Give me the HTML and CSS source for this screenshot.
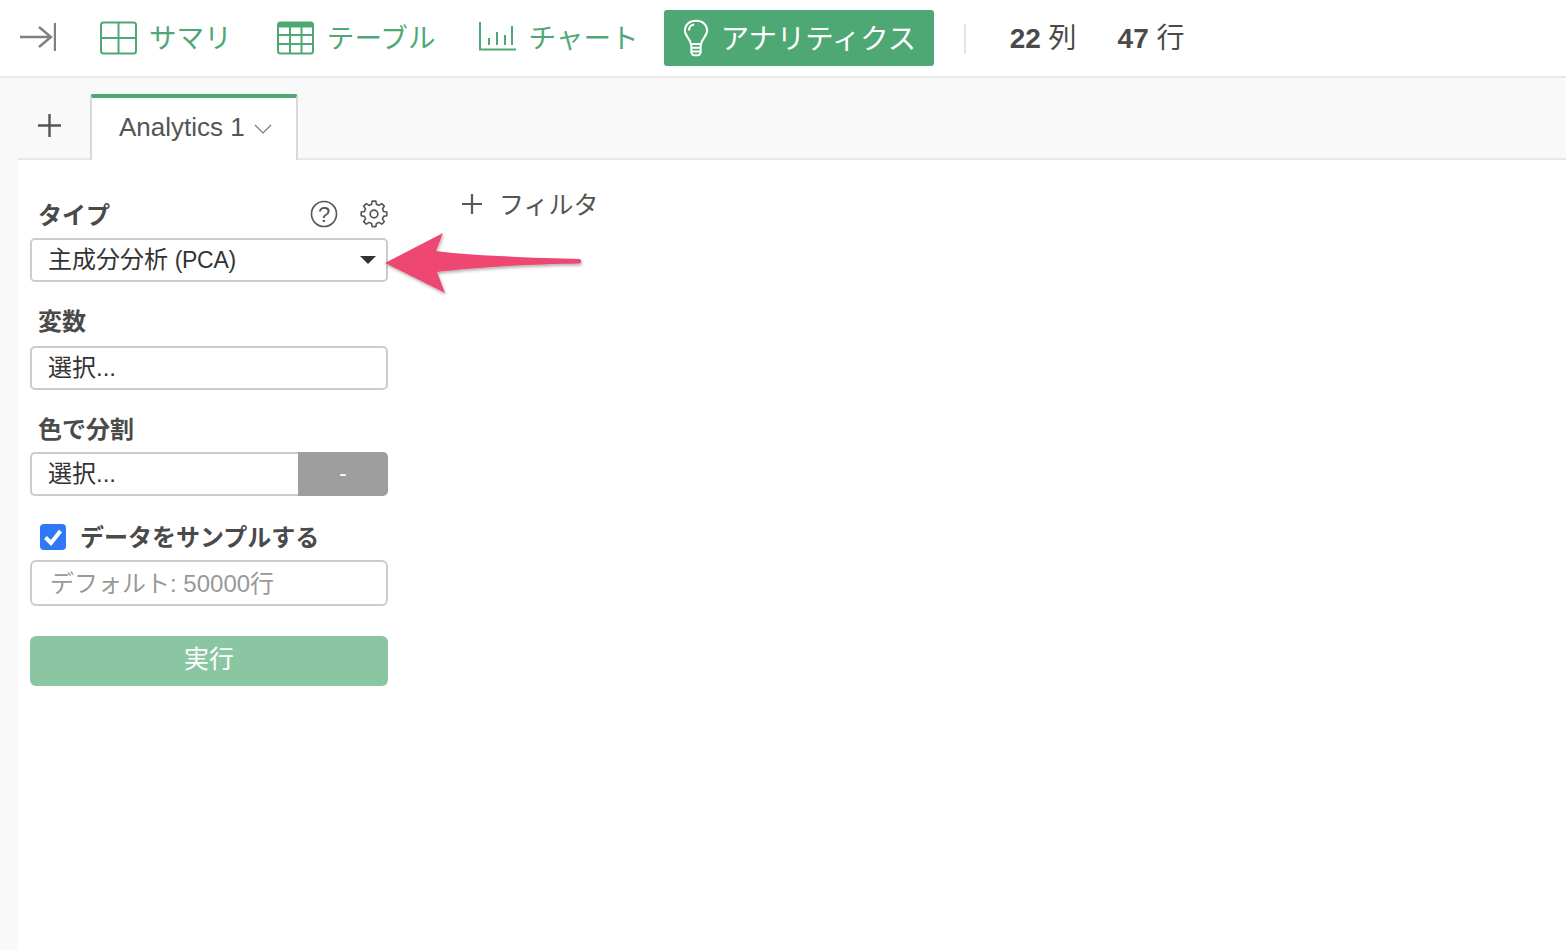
FILE: index.html
```html
<!DOCTYPE html>
<html lang="ja">
<head>
<meta charset="utf-8">
<title>Analytics</title>
<link rel="stylesheet" href="styles.css">
</head>
<body>
<header class="topbar">
  <svg class="collapse" width="36" height="30" viewBox="0 0 36 30" fill="none" stroke="#808080" stroke-width="2.400"><path d="M0 15H31M19 5L31 15L19 25M35 1V29"/></svg>
  <a class="nav nav-summary">
    <svg width="38" height="34" viewBox="0 0 38 34" fill="none" stroke="#4ea874" stroke-width="2"><rect x="1" y="1.500" width="35" height="31" rx="2.500"/><path d="M18.500 2V32M1 17H36"/></svg>
    <span>サマリ</span>
  </a>
  <a class="nav nav-table">
    <svg width="38" height="34" viewBox="0 0 38 34" fill="none" stroke="#4ea874" stroke-width="2"><rect x="1" y="1.500" width="35" height="31" rx="2.500"/><path d="M1 4H36" stroke-width="5"/><path d="M13 5V32M24.500 5V32M1 14H36M1 23H36"/></svg>
    <span>テーブル</span>
  </a>
  <a class="nav nav-chart">
    <svg class="chart-icon" width="38" height="30" viewBox="0 0 38 30" fill="none" stroke="#4ea874" stroke-width="2"><path d="M1 0V27.500H37M10 16V23M18 10V23M26 13V23M33 4V23"/></svg>
    <span>チャート</span>
  </a>
  <a class="nav nav-analytics">
    <svg width="26" height="38" viewBox="0 0 28 40" fill="none" stroke="#fff" stroke-width="2.200"><path d="M8.500 26.500C8 21 2 18 2 12C2 5.500 7 1.500 14 1.500C21 1.500 26 5.500 26 12C26 18 20 21 19.500 26.500Z"/><path d="M6.500 12C6.500 8.500 9 6 12 5.500M9 26.500V35C9 37 10.500 38.500 12 38.500H16C17.500 38.500 19 37 19 35V26.500M9 30.500H19M9 34.500H19"/></svg>
    <span>アナリティクス</span>
  </a>
  <div class="divider"></div>
  <div class="stat"><b>22</b> 列</div>
  <div class="stat"><b>47</b> 行</div>
</header>

<div class="tabbar">
  <div class="tabstrip">
    <span class="add-tab"><svg width="23" height="23" viewBox="0 0 23 23" stroke="#555" stroke-width="2.400"><path d="M0 11.500H23M11.500 0V23"/></svg></span>
    <div class="tab">
      <span>Analytics 1</span>
      <svg width="18" height="10" viewBox="0 0 18 10" fill="none" stroke="#777" stroke-width="1.200"><path d="M1 1L9 9L17 1"/></svg>
    </div>
  </div>
</div>

<main class="workspace">
  <aside class="panel">
    <div class="label-row type-row">
      <label class="label">タイプ</label>
      <div class="tools">
        <svg width="28" height="28" viewBox="0 0 28 28" fill="none" stroke="#555" stroke-width="1.600"><circle cx="14" cy="14" r="12.500"/><text x="14" y="21.500" text-anchor="middle" class="q">?</text></svg>
        <svg width="28" height="28" viewBox="0 0 24 24" fill="none" stroke="#555" stroke-width="1.500" stroke-linejoin="round"><circle cx="12" cy="12" r="3.300"/><path d="M10.300 1.500h3.400l.6 3 2.300 1 2.600-1.700 2.400 2.400-1.700 2.600 1 2.300 3 .6v3.400l-3 .6-1 2.300 1.700 2.600-2.400 2.400-2.600-1.700-2.300 1-.6 3h-3.400l-.6-3-2.300-1-2.600 1.700-2.400-2.400 1.700-2.600-1-2.300-3-.6v-3.400l3-.6 1-2.300-1.700-2.600 2.400-2.400 2.600 1.700 2.300-1z" transform="translate(12 12) scale(.92) translate(-12 -13.500)"/></svg>
      </div>
    </div>
    <div class="field select-field">
      <span>主成分分析 <span class="latin">(PCA)</span></span>
      <i class="caret"></i>
    </div>
    <label class="label label-vars">変数</label>
    <div class="field"><span>選択...</span></div>
    <label class="label label-color">色で分割</label>
    <div class="split">
      <div class="field split-field"><span>選択...</span></div>
      <div class="split-btn">-</div>
    </div>
    <div class="check-row">
      <span class="checkbox"><svg width="24" height="24" viewBox="0 0 24 24" fill="none" stroke="#fff" stroke-width="4"><path d="M4.500 12.500L10 18L19.500 6"/></svg></span>
      <label class="label">データをサンプルする</label>
    </div>
    <div class="field sample-field"><span>デフォルト: 50000行</span></div>
    <button class="run">実行</button>
  </aside>
  <div class="filter"><svg width="20" height="20" viewBox="0 0 20 20" stroke="#555" stroke-width="2.200"><path d="M0 10H20M10 0V20"/></svg><span>フィルタ</span></div>
  <svg class="arrow" width="206" height="66" viewBox="0 0 206 66">
    <defs><filter id="sh" x="-10%" y="-20%" width="120%" height="140%"><feDropShadow dx="1" dy="2" stdDeviation="1.500" flood-color="#000" flood-opacity=".3"/></filter></defs>
    <path filter="url(#sh)" fill="#ee4672" d="M2 31L60 1L53 19C90 24 160 26 196 27C199 27.500 199 31 196 31.500C160 32 90 35 54 40L62 61Z"/>
  </svg>
</main>
</body>
</html>
```

FILE: styles.css
```css
* { box-sizing: border-box; }
html, body { margin: 0; height: 100%; }
body {
  width: 1566px;
  height: 950px;
  overflow: hidden;
  background: #fff;
  color: #4a4a4a;
  font-family: "Liberation Sans", "Noto Sans CJK JP", sans-serif;
  display: flex;
  flex-direction: column;
}
.topbar {
  height: 78px;
  flex: none;
  border-bottom: 2px solid #e8e8e8;
  display: flex;
  align-items: center;
  padding-left: 20px;
}
.collapse { margin-right: 44px; margin-bottom: 2px; }
.nav {
  display: flex;
  align-items: center;
  color: #4ea874;
  font-size: 27.6px;
}
.nav span { padding-bottom: 4px; }
.nav-summary { gap: 11px; margin-right: 45px; }
.nav-table { gap: 12px; margin-right: 43px; }
.nav-chart { gap: 12px; margin-right: 25px; }
.chart-icon { margin-bottom: 2px; }
.nav-analytics {
  width: 270px;
  height: 56px;
  padding-left: 19px;
  gap: 12px;
  border-radius: 3px;
  background: #4ea874;
  color: #fff;
  font-size: 28.4px;
}
.divider {
  width: 2px;
  height: 30px;
  margin: 2px 44px 0 30px;
  background: #e3e3e3;
}
.stat {
  font-size: 28px;
  margin-right: 41px;
  padding-bottom: 4px;
  color: #4a4a4a;
}
.tabbar {
  height: 82px;
  flex: none;
  background: #f9f9f9;
  padding-left: 18px;
  display: flex;
}
.tabstrip {
  flex: 1;
  border-bottom: 2px solid #e8e8e8;
  display: flex;
  align-items: flex-end;
}
.add-tab {
  width: 72px;
  align-self: stretch;
  padding: 14px 0 0 20px;
  display: flex;
  align-items: center;
}
.tab {
  width: 208px;
  height: 66px;
  margin-bottom: -2px;
  background: #fff;
  border: 2px solid #d8d8d8;
  border-top: 4px solid #4ea874;
  border-bottom: 0;
  border-radius: 3px 3px 0 0;
  padding: 13px 0 0 27px;
  display: flex;
  align-items: flex-start;
  gap: 9px;
  font-size: 26px;
  line-height: 32px;
  color: #555;
}
.tab svg { margin-top: 13px; }
.workspace {
  flex: 1;
  position: relative;
  margin-left: 18px;
  background: #fff;
  display: flex;
  box-shadow: -18px 0 0 #f9f9f9;
}
.panel {
  width: 358px;
  margin-left: 12px;
  display: flex;
  flex-direction: column;
}
.label {
  display: block;
  font-size: 24px;
  line-height: 28px;
  font-weight: 700;
  color: #4a4a4a;
  margin-left: 8px;
}
.label-row { display: flex; align-items: center; justify-content: space-between; }
.type-row { margin-top: 39px; height: 30px; margin-bottom: 9px; }
.type-row .label { padding-top: 3px; height: 30px; }
.tools { display: flex; gap: 22px; }
.q { font: 22px "Liberation Sans", sans-serif; fill: #555; stroke: none; }
.field {
  height: 44px;
  border: 2px solid #ccc;
  border-radius: 5px;
  background: #fff;
  padding: 0 0 6px 16px;
  font-size: 24px;
  color: #333;
  display: flex;
  align-items: center;
}
.select-field { justify-content: space-between; padding-right: 10px; }
.latin { font-size: 23px; letter-spacing: -.3px; }
.caret {
  width: 0;
  height: 0;
  margin-top: 6px;
  border-left: 8px solid transparent;
  border-right: 8px solid transparent;
  border-top: 8px solid #333;
}
.label-vars { margin-top: 26px; margin-bottom: 10px; }
.label-color { margin-top: 26px; margin-bottom: 8px; }
.split { display: flex; height: 44px; }
.split-field { width: 268px; border-right: 0; border-radius: 5px 0 0 5px; }
.split-btn {
  flex: 1;
  background: #9e9e9e;
  color: #fff;
  border-radius: 0 5px 5px 0;
  text-align: center;
  font-size: 22px;
  line-height: 44px;
}
.check-row { display: flex; align-items: center; margin-top: 26px; margin-bottom: 8px; padding-left: 10px; height: 30px; }
.checkbox {
  width: 26px;
  height: 26px;
  background: #2f78f6;
  border-radius: 4px;
  display: flex;
  align-items: center;
  justify-content: center;
}
.check-row .label { margin-left: 14px; padding-top: 2px; height: 30px; }
.sample-field {
  height: 46px;
  padding: 0 0 4px 18px;
  color: #999;
  border-radius: 6px;
}
.run {
  height: 50px;
  margin-top: 30px;
  border: 0;
  border-radius: 6px;
  background: #8ac6a2;
  color: #fff;
  font: 25px "Liberation Sans", "Noto Sans CJK JP", sans-serif;
  padding: 0 0 9px;
}
.filter {
  margin: 24px 0 0 74px;
  height: 40px;
  display: flex;
  align-items: center;
  gap: 17px;
  font-size: 25px;
  color: #555;
}
.filter span { padding-bottom: 2px; }
.arrow {
  position: absolute;
  left: 365px;
  top: 72px;
}
```
